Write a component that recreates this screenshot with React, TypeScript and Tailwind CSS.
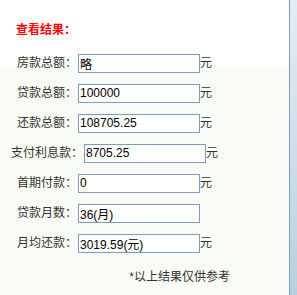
const rows: { label: string; value: string; unit: boolean }[] = [
  { label: "房款总额：", value: "略", unit: true },
  { label: "贷款总额：", value: "100000", unit: true },
  { label: "还款总额：", value: "108705.25", unit: true },
  { label: "支付利息款：", value: "8705.25", unit: true },
  { label: "首期付款：", value: "0", unit: true },
  { label: "贷款月数：", value: "36(月)", unit: false },
  { label: "月均还款：", value: "3019.59(元)", unit: true },
];

function ResultRow({ label, value, unit }: { label: string; value: string; unit: boolean }) {
  return (
    <div className="h-[30px] flex items-center justify-center">
      <span className="text-[12px] leading-none text-[#333] mr-[1px]">{label}</span>
      <input
        readOnly
        value={value}
        className="w-[122px] h-[19px] border border-[#7f9db9] bg-white px-[1px] text-[12px] text-black outline-none"
      />
      {/* keep the row width even when there's no unit */}
      <span className={"text-[12px] leading-none text-[#333] " + (unit ? "" : "invisible")}>元</span>
    </div>
  );
}

export default function App() {
  return (
    <div
      className="flex h-[295px] w-[297px] overflow-hidden"
      style={{ fontFamily: '"Liberation Sans", "Noto Sans CJK SC", sans-serif' }}
    >
      <div className="w-[290px] h-full bg-[linear-gradient(to_bottom,#ffffff_0px,#ffffff_62px,#f9fbf6_70px,#f9fbf6_100%)] border-r border-[#7fa0b8]">
        <div className="pl-[16px] pt-[17px] h-[48px]">
          <span className="text-[12px] font-bold text-[#ff0000]">查看结果：</span>
        </div>
        <div className="w-[229px]">
          {rows.map((r) => (
            <ResultRow key={r.label} {...r} />
          ))}
        </div>
        <div className="flex justify-end pr-[59px] pt-[10px]">
          <span className="text-[12px] text-[#333]">*以上结果仅供参考</span>
        </div>
      </div>
      <div className="flex-1 h-full bg-[linear-gradient(to_bottom,#e5edf4,#b8cfdf)]" />
    </div>
  );
}
